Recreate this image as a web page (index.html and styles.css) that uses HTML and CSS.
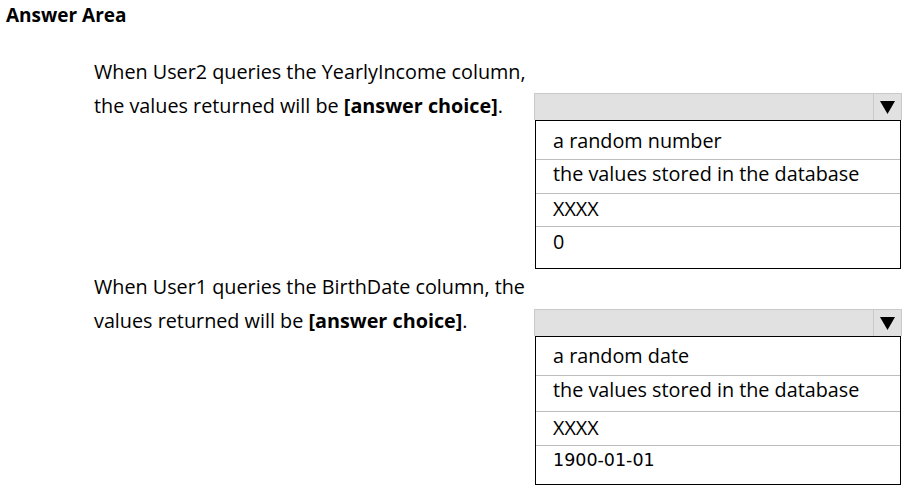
FILE: index.html
```html
<!DOCTYPE html>
<html>
<head>
<meta charset="utf-8">
<link rel="stylesheet" href="styles.css">
</head>
<body>
<h1 class="title">Answer Area</h1>
<div class="question q1">
  <p class="prompt">When User2 queries the YearlyIncome column,<br>the values returned will be <b>[answer choice]</b>.</p>
  <div class="dropdown">
    <div class="select"><span class="value"></span><span class="arrow"><svg width="15" height="13" viewBox="0 0 15 13"><polygon points="0,0 15,0 7.5,13" fill="#000"/></svg></span></div>
    <ul class="options">
      <li class="opt o1">a random number</li>
      <li class="opt o2">the values stored in the database</li>
      <li class="opt o3">XXXX</li>
      <li class="opt o4">0</li>
    </ul>
  </div>
</div>
<div class="question q2">
  <p class="prompt">When User1 queries the BirthDate column, the<br>values returned will be <b>[answer choice]</b>.</p>
  <div class="dropdown">
    <div class="select"><span class="value"></span><span class="arrow"><svg width="15" height="13" viewBox="0 0 15 13"><polygon points="0,0 15,0 7.5,13" fill="#000"/></svg></span></div>
    <ul class="options">
      <li class="opt p1">a random date</li>
      <li class="opt p2">the values stored in the database</li>
      <li class="opt p3">XXXX</li>
      <li class="opt p4 date">1900-01-01</li>
    </ul>
  </div>
</div>
</body>
</html>
```
FILE: styles.css
```css
html, body {
  margin: 0;
  padding: 0;
  background: #fff;
}
body {
  font-family: "Open Sans", "Noto Sans", sans-serif;
  color: #000;
  width: 911px;
  height: 486px;
  overflow: hidden;
}
.title {
  margin: 0;
  padding: 3px 0 0 6px;
  font-size: 19px;
  line-height: 24px;
  font-weight: 700;
}
.question {
  display: flex;
  align-items: flex-start;
}
.q1 { margin-top: 28px; }
.q2 { margin-top: 1px; }
.prompt {
  margin: 0;
  padding-left: 94px;
  width: 440px;
  font-size: 19.8px;
  line-height: 34px;
  white-space: nowrap;
}
.prompt b { font-weight: 700; }
.dropdown {
  width: 368px;
}
.q1 .dropdown { margin-top: 38px; }
.q2 .dropdown { margin-top: 39px; }
.select {
  display: flex;
  height: 27px;
  box-sizing: border-box;
  background: #e1e1e1;
  border: 1px solid #c9c9c9;
  border-bottom: none;
}
.value { flex: 1; }
.arrow {
  width: 27px;
  border-left: 1px solid #c9c9c9;
  display: flex;
  align-items: center;
  justify-content: center;
}
.options {
  list-style: none;
  margin: 0 1px;
  padding: 0;
  border: 1px solid #000;
}
.opt {
  box-sizing: border-box;
  padding-left: 17px;
  font-size: 19.8px;
  line-height: 24px;
  border-bottom: 1px solid #bdbdbd;
  white-space: nowrap;
}
.opt:last-child { border-bottom: none; }
.o1 { height: 39px; padding-top: 8px; }
.o2 { height: 34px; padding-top: 2px; }
.o3 { height: 33px; padding-top: 3px; }
.o4 { height: 41px; padding-top: 3px; }
.p1 { height: 39px; padding-top: 7px; }
.p2 { height: 36px; padding-top: 2px; }
.p3 { height: 34px; padding-top: 4px; }
.p4 { height: 38px; padding-top: 2px; }
.date {
  font-family: "DejaVu Sans", sans-serif;
  font-size: 17.5px;
}
```
